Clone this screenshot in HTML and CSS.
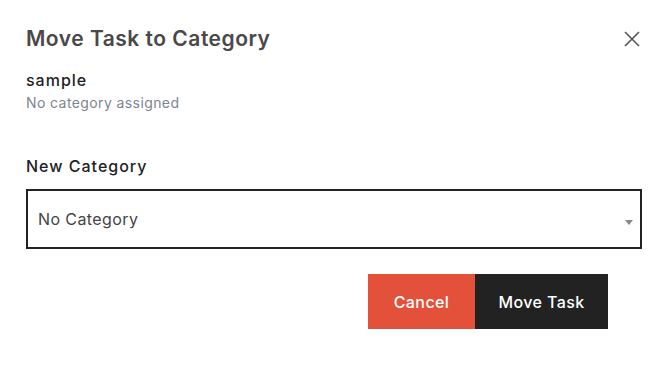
FILE: index.html
```html
<!DOCTYPE html>
<html lang="en">
<head>
  <meta charset="UTF-8" />
  <meta name="viewport" content="width=device-width, initial-scale=1.0" />
  <title>Move Task to Category</title>
  <link rel="stylesheet" href="styles.css">
</head>
<body>

  <div class="modal">
    <header class="modal-header">
      <h2>Move Task to Category</h2>
      <button class="close-btn" aria-label="Close">
        <svg width="16" height="16" viewBox="0 0 16 16">
          <path d="M1 1 L15 15 M15 1 L1 15" stroke="#555" stroke-width="1.6" fill="none" />
        </svg>
      </button>
    </header>

    <div class="task-info">
      <div class="task-name">sample</div>
      <div class="task-category">No category assigned</div>
    </div>

    <div class="field">
      <label for="category">New Category</label>
      <div class="select-wrap">
        <select id="category">
          <option>No Category</option>
        </select>
        <span class="select-arrow"></span>
      </div>
    </div>

    <div class="actions">
      <button class="btn btn-cancel">Cancel</button>
      <button class="btn btn-move">Move Task</button>
    </div>
  </div>

</body>
</html>
```

FILE: styles.css
```css
body {
  font-family: Inter, "Noto Sans", sans-serif;
  margin: 0;
  padding: 0;
  background: #fff;
  color: #222;
}
.modal {
  padding: 24px 29px 0 26px;
}
.modal-header {
  display: flex;
  justify-content: space-between;
  align-items: center;
}
.modal-header h2 {
  margin: 0;
  font-size: 21px;
  font-weight: 600;
  letter-spacing: 0.5px;
  color: #4a4848;
  line-height: 30px;
}
.close-btn {
  background: none;
  border: none;
  padding: 0;
  width: 16px;
  height: 16px;
  cursor: pointer;
  margin-right: 2px;
}
.task-info {
  margin-top: 15px;
}
.task-name {
  font-size: 16px;
  font-weight: 500;
  letter-spacing: 1px;
  color: #222;
  line-height: 22px;
}
.task-category {
  font-size: 14px;
  letter-spacing: 0.4px;
  color: #7d8591;
  line-height: 20px;
  margin-top: 2px;
}
.field {
  margin-top: 42px;
}
.field label {
  display: block;
  font-size: 16px;
  font-weight: 500;
  letter-spacing: 1px;
  color: #222;
  line-height: 22px;
}
.select-wrap {
  position: relative;
  margin-top: 12px;
}
.select-wrap select {
  width: 100%;
  height: 60px;
  appearance: none;
  border: 2px solid #222;
  border-radius: 0;
  background: #fff;
  padding: 0 10px;
  font-family: inherit;
  font-size: 16px;
  letter-spacing: 0.4px;
  color: #444;
}
.select-arrow {
  position: absolute;
  right: 9px;
  top: 31px;
  border-left: 4px solid transparent;
  border-right: 4px solid transparent;
  border-top: 5px solid #888;
}
.actions {
  display: flex;
  justify-content: flex-end;
  margin-top: 25px;
  padding-right: 34px;
}
.btn {
  height: 55px;
  border: none;
  border-radius: 0;
  font-family: inherit;
  font-size: 16px;
  font-weight: 500;
  letter-spacing: 0.4px;
  color: #fff;
  cursor: pointer;
}
.btn-cancel {
  background: #e4513a;
  width: 107px;
}
.btn-move {
  background: #222;
  width: 133px;
}
```
